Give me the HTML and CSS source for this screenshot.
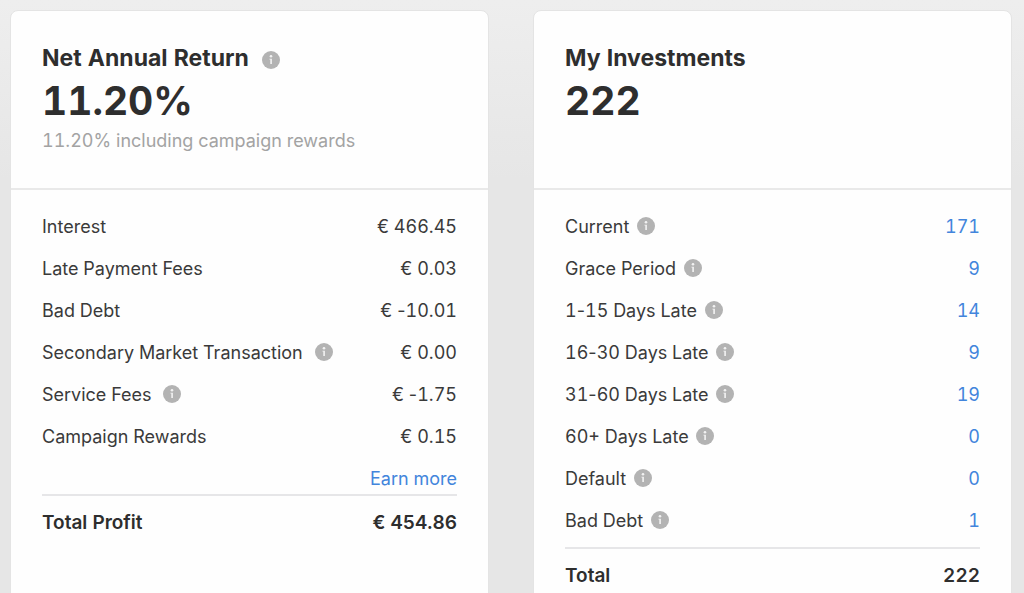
FILE: index.html
```html
<!DOCTYPE html>
<html lang="en">
<head>
  <meta charset="UTF-8">
  <title>Account Overview</title>
  <meta name="viewport" content="width=device-width, initial-scale=1">
  <link rel="stylesheet" href="styles.css">
</head>
<body>
  <!-- Info icon, reused by every tooltip button -->
  <svg class="sprite" aria-hidden="true">
    <symbol id="info" viewBox="0 0 18 18">
      <circle cx="9" cy="9" r="9" fill="#b3b3b3"/>
      <circle cx="9" cy="5.2" r="1.3" fill="#f2f2f2"/>
      <path d="M7.4 7.7h2.5v5.2H8.3V8.6h-.9z" fill="#f2f2f2"/>
    </symbol>
  </svg>

  <main class="overview">
    <section class="card">
      <header class="card-head">
        <h2>Net Annual Return <button type="button" class="info info-wide" aria-label="About net annual return"><svg><use href="#info"/></svg></button></h2>
        <p class="figure">11.20%</p>
        <p class="note">11.20% including campaign rewards</p>
      </header>
      <div class="card-body">
        <table>
          <tbody>
            <tr><th scope="row">Interest</th><td>€ 466.45</td></tr>
            <tr><th scope="row">Late Payment Fees</th><td>€ 0.03</td></tr>
            <tr><th scope="row">Bad Debt</th><td>€ <span class="dash">-</span>10.01</td></tr>
            <tr><th scope="row">Secondary Market Transaction <button type="button" class="info info-wide" aria-label="About secondary market transaction"><svg><use href="#info"/></svg></button></th><td>€ 0.00</td></tr>
            <tr><th scope="row">Service Fees <button type="button" class="info info-wide" aria-label="About service fees"><svg><use href="#info"/></svg></button></th><td>€ <span class="dash">-</span>1.75</td></tr>
            <tr><th scope="row">Campaign Rewards</th><td>€ 0.15</td></tr>
            <tr class="more"><td colspan="2"><a href="#">Earn more</a></td></tr>
          </tbody>
          <tfoot>
            <tr><th scope="row">Total Profit</th><td>€ 454.86</td></tr>
          </tfoot>
        </table>
      </div>
    </section>

    <section class="card">
      <header class="card-head">
        <h2>My Investments</h2>
        <p class="figure">222</p>
      </header>
      <div class="card-body">
        <table>
          <tbody>
            <tr><th scope="row">Current <button type="button" class="info" aria-label="About current"><svg><use href="#info"/></svg></button></th><td><a href="#">171</a></td></tr>
            <tr><th scope="row">Grace Period <button type="button" class="info" aria-label="About grace period"><svg><use href="#info"/></svg></button></th><td><a href="#">9</a></td></tr>
            <tr><th scope="row">1<span class="dash">-</span>15 Days Late <button type="button" class="info" aria-label="About 1-15 days late"><svg><use href="#info"/></svg></button></th><td><a href="#">14</a></td></tr>
            <tr><th scope="row">16<span class="dash">-</span>30 Days Late <button type="button" class="info" aria-label="About 16-30 days late"><svg><use href="#info"/></svg></button></th><td><a href="#">9</a></td></tr>
            <tr><th scope="row">31<span class="dash">-</span>60 Days Late <button type="button" class="info" aria-label="About 31-60 days late"><svg><use href="#info"/></svg></button></th><td><a href="#">19</a></td></tr>
            <tr><th scope="row">60+ Days Late <button type="button" class="info" aria-label="About 60+ days late"><svg><use href="#info"/></svg></button></th><td><a href="#">0</a></td></tr>
            <tr><th scope="row">Default <button type="button" class="info" aria-label="About default"><svg><use href="#info"/></svg></button></th><td><a href="#">0</a></td></tr>
            <tr class="last"><th scope="row">Bad Debt <button type="button" class="info" aria-label="About bad debt"><svg><use href="#info"/></svg></button></th><td><a href="#">1</a></td></tr>
          </tbody>
          <tfoot>
            <tr><th scope="row">Total</th><td>222</td></tr>
          </tfoot>
        </table>
      </div>
    </section>
  </main>
</body>
</html>
```
FILE: styles.css
```css
:root { --text: #2e2e2e; --row: #3a3a3a; --muted: #a3a3a3; --line: #e6e6e8; --link: #4285dc; }
* { box-sizing: border-box; margin: 0; padding: 0; }
body { font-family: Inter, "Liberation Sans", sans-serif; font-size: 18px; line-height: 24px; font-variant-numeric: tabular-nums; color: var(--text); background: linear-gradient(#eeeeee, #e6e6e6 180px); }
a { color: var(--link); text-decoration: none; }
a:hover { text-decoration: underline; }
.sprite { display: none; }

.overview { display: grid; grid-template-columns: 1fr 1fr; gap: 44px; padding: 10px 12px 10px 10px; }
.card { background: #fefefe; border: 1px solid #e4e4e4; border-radius: 8px; }
.card-head { min-height: 179px; padding: 32px 31px; border-bottom: 2px solid #e9e9e9; }
.card-head h2 { font-size: 23px; line-height: 30px; font-weight: 700; }
.figure { font-size: 39px; line-height: 56px; font-weight: 700; }
.note { color: var(--muted); }

.card-body { padding: 16px 31px; }
table { width: 100%; border-collapse: separate; border-spacing: 0; }
th, td { padding: 9px 0; text-align: left; font-weight: 400; color: var(--row); white-space: nowrap; }
td { text-align: right; }
/* tabular figures widen the hyphen too */
.dash { font-variant-numeric: normal; }
.more td { padding-bottom: 3px; }
.last th, .last td { padding-bottom: 14px; }
tfoot th, tfoot td { padding-top: 15px; font-size: 19px; font-weight: 600; color: var(--text); border-top: 2px solid var(--line); }

.info { width: 18px; height: 18px; margin-left: 3px; border: none; background: none; vertical-align: -2px; cursor: pointer; }
.info svg { display: block; width: 18px; height: 18px; }
.info-wide { margin-left: 7px; }
.card-head .info { vertical-align: -3px; }
```
